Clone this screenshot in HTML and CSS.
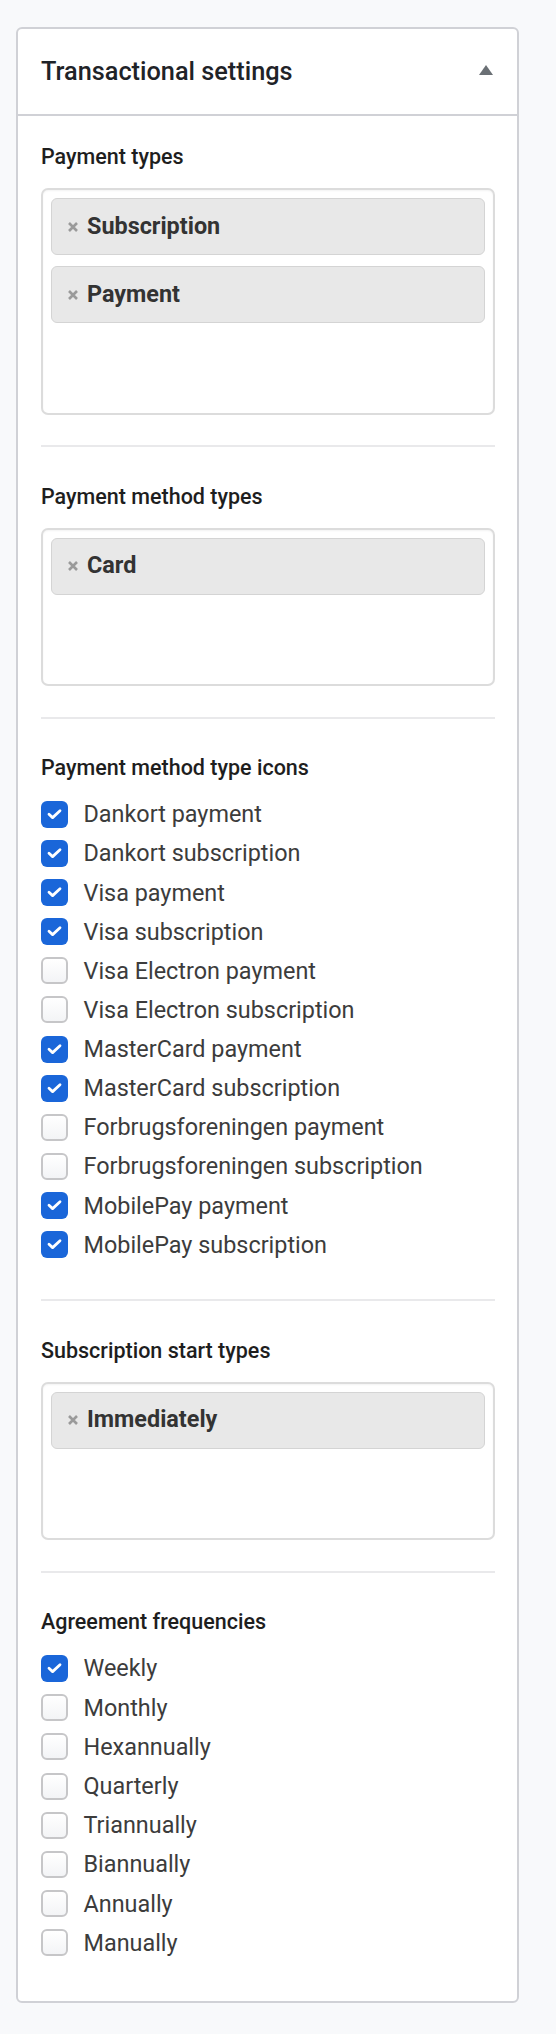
FILE: index.html
```html
<!DOCTYPE html>
<html lang="en">
<head>
<meta charset="utf-8">
<title>Transactional settings</title>
<link rel="stylesheet" href="styles.css">
</head>
<body>
<div class="card">
  <div class="card-header">
    <h2 class="card-title">Transactional settings</h2>
    <svg class="caret" width="14" height="10" viewBox="0 0 14 10" aria-hidden="true"><polygon points="7,0 14,10 0,10" fill="#6b7075"/></svg>
  </div>
  <div class="card-body">

    <div class="section section-first section-box">
      <div class="label">Payment types</div>
      <div class="select">
        <div class="tags">
          <div class="tag"><svg class="x" width="12" height="12" viewBox="0 0 12 12"><path d="M2 2L10 10M10 2L2 10" stroke="#9a9a9a" stroke-width="2.6"/></svg><span>Subscription</span></div>
          <div class="tag"><svg class="x" width="12" height="12" viewBox="0 0 12 12"><path d="M2 2L10 10M10 2L2 10" stroke="#9a9a9a" stroke-width="2.6"/></svg><span>Payment</span></div>
          <div class="search"></div>
        </div>
      </div>
    </div>

    <div class="section section-box">
      <div class="label">Payment method types</div>
      <div class="select">
        <div class="tags">
          <div class="tag"><svg class="x" width="12" height="12" viewBox="0 0 12 12"><path d="M2 2L10 10M10 2L2 10" stroke="#9a9a9a" stroke-width="2.6"/></svg><span>Card</span></div>
          <div class="search"></div>
        </div>
      </div>
    </div>

    <div class="section section-checks">
      <div class="label">Payment method type icons</div>
      <div class="checks">
        <div class="check"><span class="cb on"><svg width="27" height="27" viewBox="0 0 27 27"><path d="M8 13.3L11.6 16.6L19 9.8" fill="none" stroke="#fff" stroke-width="2.8" stroke-linecap="round" stroke-linejoin="round"/></svg></span><span class="text">Dankort payment</span></div>
        <div class="check"><span class="cb on"><svg width="27" height="27" viewBox="0 0 27 27"><path d="M8 13.3L11.6 16.6L19 9.8" fill="none" stroke="#fff" stroke-width="2.8" stroke-linecap="round" stroke-linejoin="round"/></svg></span><span class="text">Dankort subscription</span></div>
        <div class="check"><span class="cb on"><svg width="27" height="27" viewBox="0 0 27 27"><path d="M8 13.3L11.6 16.6L19 9.8" fill="none" stroke="#fff" stroke-width="2.8" stroke-linecap="round" stroke-linejoin="round"/></svg></span><span class="text">Visa payment</span></div>
        <div class="check"><span class="cb on"><svg width="27" height="27" viewBox="0 0 27 27"><path d="M8 13.3L11.6 16.6L19 9.8" fill="none" stroke="#fff" stroke-width="2.8" stroke-linecap="round" stroke-linejoin="round"/></svg></span><span class="text">Visa subscription</span></div>
        <div class="check"><span class="cb"></span><span class="text">Visa Electron payment</span></div>
        <div class="check"><span class="cb"></span><span class="text">Visa Electron subscription</span></div>
        <div class="check"><span class="cb on"><svg width="27" height="27" viewBox="0 0 27 27"><path d="M8 13.3L11.6 16.6L19 9.8" fill="none" stroke="#fff" stroke-width="2.8" stroke-linecap="round" stroke-linejoin="round"/></svg></span><span class="text">MasterCard payment</span></div>
        <div class="check"><span class="cb on"><svg width="27" height="27" viewBox="0 0 27 27"><path d="M8 13.3L11.6 16.6L19 9.8" fill="none" stroke="#fff" stroke-width="2.8" stroke-linecap="round" stroke-linejoin="round"/></svg></span><span class="text">MasterCard subscription</span></div>
        <div class="check"><span class="cb"></span><span class="text">Forbrugsforeningen payment</span></div>
        <div class="check"><span class="cb"></span><span class="text">Forbrugsforeningen subscription</span></div>
        <div class="check"><span class="cb on"><svg width="27" height="27" viewBox="0 0 27 27"><path d="M8 13.3L11.6 16.6L19 9.8" fill="none" stroke="#fff" stroke-width="2.8" stroke-linecap="round" stroke-linejoin="round"/></svg></span><span class="text">MobilePay payment</span></div>
        <div class="check"><span class="cb on"><svg width="27" height="27" viewBox="0 0 27 27"><path d="M8 13.3L11.6 16.6L19 9.8" fill="none" stroke="#fff" stroke-width="2.8" stroke-linecap="round" stroke-linejoin="round"/></svg></span><span class="text">MobilePay subscription</span></div>
      </div>
    </div>

    <div class="section section-box">
      <div class="label">Subscription start types</div>
      <div class="select">
        <div class="tags">
          <div class="tag"><svg class="x" width="12" height="12" viewBox="0 0 12 12"><path d="M2 2L10 10M10 2L2 10" stroke="#9a9a9a" stroke-width="2.6"/></svg><span>Immediately</span></div>
          <div class="search"></div>
        </div>
      </div>
    </div>

    <div class="section section-last">
      <div class="label">Agreement frequencies</div>
      <div class="checks checks-freq">
        <div class="check"><span class="cb on"><svg width="27" height="27" viewBox="0 0 27 27"><path d="M8 13.3L11.6 16.6L19 9.8" fill="none" stroke="#fff" stroke-width="2.8" stroke-linecap="round" stroke-linejoin="round"/></svg></span><span class="text">Weekly</span></div>
        <div class="check"><span class="cb"></span><span class="text">Monthly</span></div>
        <div class="check"><span class="cb"></span><span class="text">Hexannually</span></div>
        <div class="check"><span class="cb"></span><span class="text">Quarterly</span></div>
        <div class="check"><span class="cb"></span><span class="text">Triannually</span></div>
        <div class="check"><span class="cb"></span><span class="text">Biannually</span></div>
        <div class="check"><span class="cb"></span><span class="text">Annually</span></div>
        <div class="check"><span class="cb"></span><span class="text">Manually</span></div>
      </div>
    </div>

  </div>
</div>
</body>
</html>
```

FILE: styles.css
```css
* { box-sizing: border-box; }

html, body {
  margin: 0;
  background: #f8f9fb;
}

body {
  padding: 27px 37px 30px 16px;
  font-family: Roboto, "Liberation Sans", Arial, sans-serif;
}

.card {
  background: #fff;
  border: 2px solid #d0d1d6;
  border-radius: 6px;
}

.card-header {
  display: flex;
  align-items: center;
  justify-content: space-between;
  padding: 27.5px 24px 27.5px 23px;
  border-bottom: 2px solid #d0d1d6;
}

.card-title {
  margin: 0;
  font-size: 25.3px;
  line-height: 30px;
  font-weight: 500;
  color: #1f2328;
}

.caret {
  display: block;
  margin-top: -3px;
}

.card-body {
  padding: 0 22px 0 23px;
}

.section {
  padding: 36.5px 0 30.5px;
  border-top: 2px solid #e9e9eb;
}

.section-first {
  padding-top: 28.2px;
  border-top: none;
}

.section-checks {
  padding-bottom: 35px;
}

.section-last {
  padding-bottom: 38.6px;
}

.label {
  font-size: 21.5px;
  line-height: 25px;
  font-weight: 500;
  color: #1e1e1e;
}

.select {
  margin-top: 19px;
  border: 2px solid #dcdcdc;
  border-radius: 7px;
  padding: 8px;
  box-shadow: inset 0 1px 2px rgba(0, 0, 0, 0.05);
}

.tags {
  display: flex;
  flex-direction: column;
  gap: 11px;
}

.tag {
  display: flex;
  align-items: center;
  height: 57px;
  padding: 0 0 2px 15px;
  background: #e8e8e8;
  border: 1.5px solid #d4d4d4;
  border-radius: 6px;
  font-size: 23.4px;
  font-weight: 700;
  color: #333;
}

.tag .x {
  display: block;
  margin-right: 8px;
  margin-top: 2px;
}

.search {
  height: 70.5px;
}

.checks {
  margin-top: 14.5px;
}

.check {
  display: flex;
  align-items: center;
  height: 39.15px;
}

.checks-freq .check {
  height: 39.2px;
}

.cb {
  flex: 0 0 27px;
  width: 27px;
  height: 27px;
  margin-right: 15.5px;
  border-radius: 6px;
  border: 2px solid #c6c6c8;
  background: linear-gradient(#ffffff, #f3f4f6);
}

.cb.on {
  border: none;
  background: #1a66d9;
}

.cb svg {
  display: block;
}

.text {
  font-size: 23.4px;
  line-height: 1.2;
  color: #3c3c3c;
}
```
